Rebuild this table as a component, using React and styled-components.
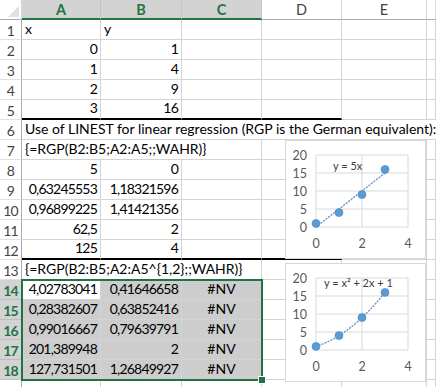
import React from 'react';
import styled, { createGlobalStyle } from 'styled-components';

const GREEN = '#217346';
const GRID = '#d4d4d4';

const GlobalStyle = createGlobalStyle`
  html, body {
    margin: 0;
    padding: 0;
    background: #fff;
  }
  body {
    font-family: Lato, "Liberation Sans", sans-serif;
  }
`;

const COLS = ['A', 'B', 'C', 'D', 'E', ''];

const rows = [
  { n: 1, cells: [{ t: 'x', left: true }, { t: 'y', left: true }, {}, {}, {}, {}] },
  { n: 2, cells: [{ t: '0' }, { t: '1' }, {}, {}, {}, {}] },
  { n: 3, cells: [{ t: '1' }, { t: '4' }, {}, {}, {}, {}] },
  { n: 4, cells: [{ t: '2' }, { t: '9' }, {}, {}, {}, {}] },
  { n: 5, cells: [{ t: '3', thick: true }, { t: '16', thick: true }, { thick: true }, { thick: true }, {}, {}] },
  { n: 6, cells: [{ t: 'Use of LINEST for linear regression (RGP is the German equivalent):', left: true, span: 6 }] },
  { n: 7, cells: [{ t: '{=RGP(B2:B5;A2:A5;;WAHR)}', left: true, span: 3 }, {}, {}, {}] },
  { n: 8, cells: [{ t: '5' }, { t: '0' }, {}, {}, {}, {}] },
  { n: 9, cells: [{ t: '0,63245553' }, { t: '1,18321596' }, {}, {}, {}, {}] },
  { n: 10, cells: [{ t: '0,96899225' }, { t: '1,41421356' }, {}, {}, {}, {}] },
  { n: 11, cells: [{ t: '62,5' }, { t: '2' }, {}, {}, {}, {}] },
  { n: 12, cells: [{ t: '125', thick: true }, { t: '4', thick: true }, { thick: true }, { thick: true }, {}, {}] },
  { n: 13, cells: [{ t: '{=RGP(B2:B5;A2:A5^{1,2};;WAHR)}', left: true, span: 3 }, {}, {}, {}] },
  { n: 14, sel: true, cells: [{ t: '4,02783041' }, { t: '0,41646658', sel: true }, { t: '#NV', center: true, sel: true }, {}, {}, {}] },
  { n: 15, sel: true, cells: [{ t: '0,28382607', sel: true }, { t: '0,63852416', sel: true }, { t: '#NV', center: true, sel: true }, {}, {}, {}] },
  { n: 16, sel: true, cells: [{ t: '0,99016667', sel: true }, { t: '0,79639791', sel: true }, { t: '#NV', center: true, sel: true }, {}, {}, {}] },
  { n: 17, sel: true, cells: [{ t: '201,389948', sel: true }, { t: '2', sel: true }, { t: '#NV', center: true, sel: true }, {}, {}, {}] },
  { n: 18, sel: true, cells: [{ t: '127,731501', sel: true }, { t: '1,26849927', sel: true }, { t: '#NV', center: true, sel: true }, {}, {}, {}] },
  { n: '', cells: [{}, {}, {}, {}, {}, {}] },
];

const pts = [[0, 1], [1, 4], [2, 9], [3, 16]];

function Chart({ label, fn, labelX, labelY, top }) {
  const px = (x) => 30 + x * 23;
  const py = (y) => 86 - y * 3.6;
  const steps = 30;
  const line = Array.from({ length: steps + 1 }, (_, i) => {
    const x = (3 * i) / steps;
    return `${px(x).toFixed(1)},${py(fn(x)).toFixed(1)}`;
  }).join(' ');
  return (
    <ChartBox $top={top}>
      <svg width="139" height="117" viewBox="0 0 139 117">
        {[0, 5, 10, 15, 20].map((v) => (
          <line key={v} x1="30" x2="122" y1={py(v)} y2={py(v)} stroke="#d9d9d9" strokeWidth="1" />
        ))}
        {[0, 2, 4].map((v) => (
          <line key={v} x1={px(v)} x2={px(v)} y1="14" y2="86" stroke="#d9d9d9" strokeWidth="1" />
        ))}
        {[0, 5, 10, 15, 20].map((v) => (
          <text key={v} x="21" y={py(v) + 4.5} textAnchor="end" fontSize="12.5" fill="#595959" fontFamily="Lato, sans-serif">{v}</text>
        ))}
        {[0, 2, 4].map((v) => (
          <text key={v} x={px(v)} y="107" textAnchor="middle" fontSize="12.5" fill="#595959" fontFamily="Lato, sans-serif">{v}</text>
        ))}
        <polyline points={line} fill="none" stroke="#6f98c4" strokeWidth="1.4" strokeDasharray="1 2.2" strokeLinecap="round" />
        {pts.map(([x, y]) => (
          <circle key={x} cx={px(x)} cy={py(y)} r="4" fill="#5b9bd5" stroke="#4a8ac4" strokeWidth="0.6" />
        ))}
        <text x={labelX} y={labelY} fontSize="11" fill="#404040" fontFamily="Lato, sans-serif">{label}</text>
      </svg>
    </ChartBox>
  );
}

export default function App() {
  return (
    <>
      <GlobalStyle />
      <Sheet>
        <Corner>
          <svg width="12" height="12" viewBox="0 0 12 12">
            <polygon points="12,1 12,12 1,12" fill="#dfdfdf" />
          </svg>
        </Corner>
        {COLS.map((c, i) => (
          <ColHead key={i} $sel={i < 3}>{c}</ColHead>
        ))}
        {rows.map((r, ri) => (
          <React.Fragment key={ri}>
            <RowHead $sel={r.sel}>{r.n}</RowHead>
            {r.cells.map((c, i) => (
              <Cell
                key={i}
                $span={c.span}
                $left={c.left}
                $center={c.center}
                $thick={c.thick}
                $sel={c.sel}
                $last={i === r.cells.length - 1}
              >
                {c.t}
              </Cell>
            ))}
          </React.Fragment>
        ))}
        <Selection>
          <Handle />
        </Selection>
        <Chart top={141} label="y = 5x" labelX={47} labelY={29} fn={(x) => 5 * x} />
        <Chart top={264} label="y = x² + 2x + 1" labelX={38} labelY={23} fn={(x) => (x + 1) * (x + 1)} />
      </Sheet>
    </>
  );
}

const Sheet = styled.div`
  position: relative;
  display: grid;
  grid-template-columns: 22px 79px 81px 80px 80px 85px 1fr;
  grid-template-rows: 20px;
  grid-auto-rows: 20px;
  width: 436px;
  height: 387px;
  overflow: hidden;
  font-size: 14px;
  color: #000;
`;

const Corner = styled.div`
  display: flex;
  align-items: flex-end;
  justify-content: flex-end;
  padding: 0 2px 2px 0;
  box-sizing: border-box;
  background: #fff;
  border-right: 1px solid #d4d4d4;
  border-bottom: 1px solid #ababab;
`;

const ColHead = styled.div`
  box-sizing: border-box;
  display: flex;
  align-items: center;
  justify-content: center;
  font-size: 14.5px;
  background: ${(p) => (p.$sel ? '#d3d3d3' : '#fff')};
  color: ${(p) => (p.$sel ? GREEN : '#444')};
  font-weight: ${(p) => (p.$sel ? 700 : 400)};
  border-right: 1px solid ${(p) => (p.$sel ? '#c4c4c4' : '#dadada')};
  border-bottom: ${(p) => (p.$sel ? `2px solid ${GREEN}` : '1px solid #ababab')};
`;

const RowHead = styled.div`
  box-sizing: border-box;
  display: flex;
  align-items: center;
  justify-content: center;
  padding-top: 1px;
  font-size: 14px;
  letter-spacing: -0.8px;
  background: ${(p) => (p.$sel ? '#d3d3d3' : '#fff')};
  color: ${(p) => (p.$sel ? GREEN : '#444')};
  font-weight: ${(p) => (p.$sel ? 700 : 400)};
  border-right: 1px solid ${(p) => (p.$sel ? GREEN : '#ababab')};
  border-bottom: 1px solid ${(p) => (p.$sel ? '#bdbdbd' : '#e1e1e1')};
`;

const Cell = styled.div`
  box-sizing: border-box;
  grid-column: span ${(p) => p.$span || 1};
  display: flex;
  align-items: flex-end;
  justify-content: ${(p) => (p.$left ? 'flex-start' : p.$center ? 'center' : 'flex-end')};
  padding: 0 3px 1px 3px;
  line-height: 18px;
  letter-spacing: ${(p) => (p.$left || p.$center ? '0' : '-0.8px')};
  white-space: nowrap;
  overflow: visible;
  background: ${(p) => (p.$sel ? '#cdcdcd' : '#fff')};
  border-right: ${(p) => (p.$last && p.$span ? 'none' : `1px solid ${GRID}`)};
  border-bottom: ${(p) => (p.$thick ? '2px solid #000' : `1px solid ${GRID}`)};
`;

const Selection = styled.div`
  position: absolute;
  left: 21px;
  top: 279px;
  width: 242px;
  height: 102px;
  box-sizing: border-box;
  border: 2px solid ${GREEN};
  pointer-events: none;
`;

const Handle = styled.div`
  position: absolute;
  right: -5px;
  bottom: -5px;
  width: 6px;
  height: 6px;
  background: ${GREEN};
  border: 1px solid #fff;
`;

const ChartBox = styled.div`
  position: absolute;
  left: 286px;
  top: ${(p) => p.$top}px;
  width: 139px;
  height: 117px;
  background: #fff;
  outline: 1px solid #d9d9d9;
  svg {
    display: block;
  }
`;
